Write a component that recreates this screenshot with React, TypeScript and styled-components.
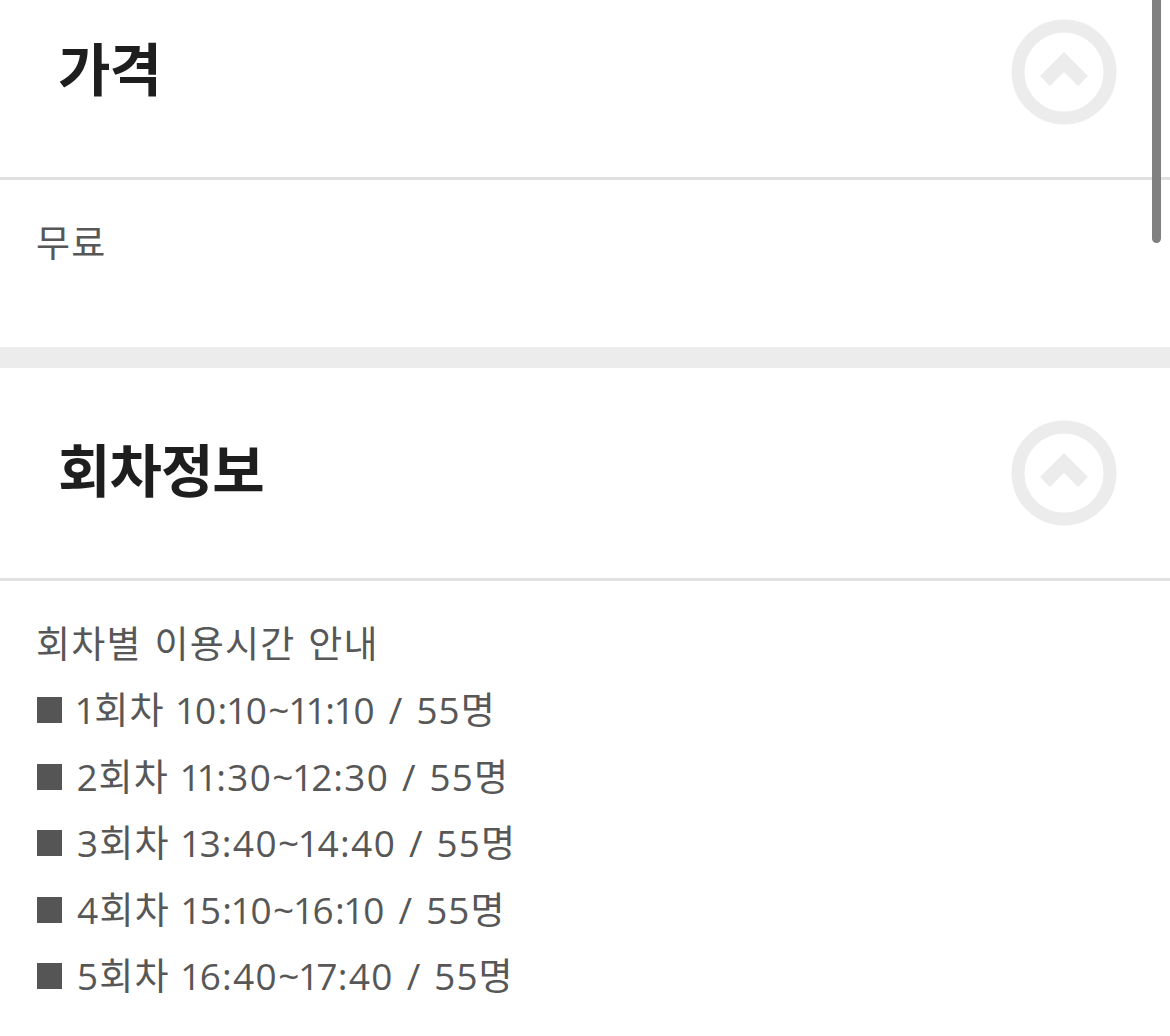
import styled, { createGlobalStyle } from "styled-components";

const Global = createGlobalStyle`
  html, body {
    margin: 0;
    padding: 0;
    background: #fff;
    font-family: "Noto Sans CJK KR", "Noto Sans", sans-serif;
  }
`;

const Page = styled.div`
  margin-top: -33px;
  width: 1170px;
  overflow: hidden;
`;

const Section = styled.section`
  background: #fff;
`;

const Header = styled.div`
  height: 210px;
  display: flex;
  align-items: center;
  justify-content: space-between;
  padding: 0 53px 0 58px;
  border-bottom: 3px solid #e0e0e0;
`;

const Title = styled.h2`
  margin: 0 0 12px;
  font-size: 57px;
  font-weight: 700;
  color: #1e1e1e;
  letter-spacing: -1px;
`;

const Toggle = styled.button`
  border: 0;
  padding: 0;
  background: none;
  width: 106px;
  height: 106px;
  display: flex;
`;

const Body = styled.div<{ $bottom: number }>`
  padding: 30px 36px ${(p) => p.$bottom}px;
  color: #575757;
  font-family: "Open Sans", "Noto Sans CJK KR", sans-serif;
  font-size: 37px;
  font-variant-numeric: proportional-nums;
  line-height: 66.5px;
  letter-spacing: 1.2px;
  word-spacing: 2px;
`;

const Line = styled.div`
  white-space: nowrap;
`;

const Bullet = styled.span`
  display: inline-block;
  width: 25px;
  height: 26px;
  background: #555;
  margin: 0 15px 0 1px;
  vertical-align: 1px;
`;

const Band = styled.div`
  height: 21px;
  background: #ececec;
`;

const Scrollbar = styled.div`
  position: fixed;
  top: 0;
  right: 9px;
  width: 9px;
  height: 243px;
  background: #808080;
  border-radius: 0 0 5px 5px;
`;

function UpIcon() {
  return (
    <svg width="106" height="106" viewBox="0 0 106 106">
      <circle cx="53" cy="53" r="46" fill="none" stroke="#ececec" strokeWidth="13" />
      <polyline
        points="34,62 53,43 72,62"
        fill="none"
        stroke="#ececec"
        strokeWidth="14"
        strokeLinejoin="miter"
      />
    </svg>
  );
}

const rounds = [
  "1회차 10:10~11:10 / 55명",
  "2회차 11:30~12:30 / 55명",
  "3회차 13:40~14:40 / 55명",
  "4회차 15:10~16:10 / 55명",
  "5회차 16:40~17:40 / 55명",
];

export default function App() {
  return (
    <>
      <Global />
      <Page>
        <Section>
          <Header>
            <Title>가격</Title>
            <Toggle aria-label="접기">
              <UpIcon />
            </Toggle>
          </Header>
          <Body $bottom={70}>
            <Line>무료</Line>
          </Body>
        </Section>
        <Band />
        <Section>
          <Header>
            <Title>회차정보</Title>
            <Toggle aria-label="접기">
              <UpIcon />
            </Toggle>
          </Header>
          <Body $bottom={40}>
            <Line>회차별 이용시간 안내</Line>
            {rounds.map((r) => (
              <Line key={r}>
                <Bullet />
                {r}
              </Line>
            ))}
          </Body>
        </Section>
      </Page>
      <Scrollbar />
    </>
  );
}
